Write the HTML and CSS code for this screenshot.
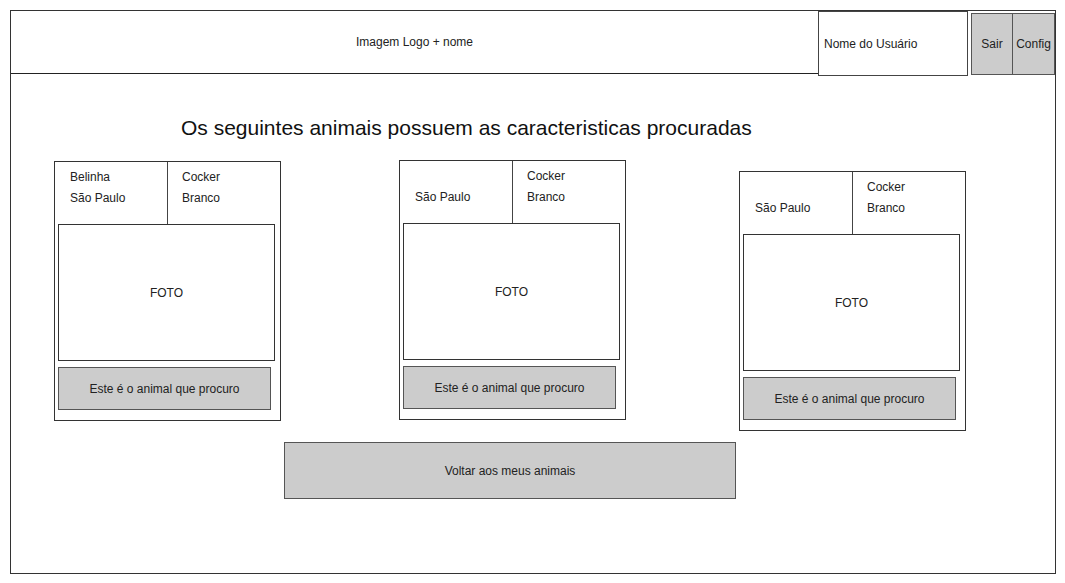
FILE: index.html
```html
<!DOCTYPE html>
<html>
  <head>
    <meta charset="utf-8">
    <title>Resultado da busca</title>
    <link rel="stylesheet" href="styles.css">
  </head>
  <body>
    <div class="frame">
      <!-- topo -->
      <div class="header">
        <div class="logo">Imagem Logo + nome</div>
        <div class="user">Nome do Usuário</div>
        <div class="header-buttons">
          <div class="hbtn">Sair</div>
          <div class="hbtn">Config</div>
        </div>
      </div>

      <div class="content">
        <h2 class="title">Os seguintes animais possuem as caracteristicas procuradas</h2>

        <div class="cards">
          <div class="card card-1">
            <div class="info">
              <div class="cell">
                <span>Belinha</span>
                <span>São Paulo</span>
              </div>
              <div class="cell cell-right">
                <span>Cocker</span>
                <span>Branco</span>
              </div>
            </div>
            <div class="photo">FOTO</div>
            <div class="pick">Este é o animal que procuro</div>
          </div>

          <div class="card card-2">
            <div class="info">
              <div class="cell cell-low">
                <span>São Paulo</span>
              </div>
              <div class="cell cell-right">
                <span>Cocker</span>
                <span>Branco</span>
              </div>
            </div>
            <div class="photo">FOTO</div>
            <div class="pick">Este é o animal que procuro</div>
          </div>

          <div class="card card-3">
            <div class="info">
              <div class="cell cell-low">
                <span>São Paulo</span>
              </div>
              <div class="cell cell-right">
                <span>Cocker</span>
                <span>Branco</span>
              </div>
            </div>
            <div class="photo">FOTO</div>
            <div class="pick">Este é o animal que procuro</div>
          </div>
        </div>

        <div class="back">Voltar aos meus animais</div>
      </div>
    </div>
  </body>
</html>
```

FILE: styles.css
```css
* {
  box-sizing: border-box;
}
body {
  margin: 0;
  background: #fff;
  font-family: "Liberation Sans", Arial, sans-serif;
  font-size: 12px;
  color: #222;
}
.frame {
  margin: 10px 0 0 10px;
  width: 1046px;
  height: 564px;
  border: 1px solid #333;
}

/* topo */
.header {
  display: flex;
  align-items: flex-start;
  height: 63px;
}
.logo {
  flex: 1;
  height: 63px;
  border-bottom: 1px solid #222;
  display: flex;
  align-items: center;
  justify-content: center;
}
.user {
  width: 150px;
  height: 65px;
  border: 1px solid #444;
  display: flex;
  align-items: center;
  padding-left: 5px;
  background: #fff;
  position: relative;
}
.header-buttons {
  display: flex;
  margin: 2px 0 0 3px;
  height: 62px;
  position: relative;
}
.hbtn {
  background: #ccc;
  border: 1px solid #555;
  display: flex;
  align-items: center;
  justify-content: center;
  width: 42px;
}
.hbtn + .hbtn {
  border-left: 0;
  width: 42px;
}

/* conteudo */
.content {
  padding-top: 41px;
}
.title {
  margin: 0;
  padding-left: 170px;
  font-size: 21px;
  font-weight: normal;
  line-height: 25px;
  color: #111;
}
.cards {
  display: flex;
  align-items: flex-start;
  margin-top: 21px;
  padding-left: 43px;
}
.card {
  width: 227px;
  height: 260px;
  border: 1px solid #333;
  padding: 0 5px 0 3px;
}
.card-2 {
  margin: -1px 0 0 118px;
}
.card-3 {
  margin: 10px 0 0 113px;
}
.info {
  display: flex;
  height: 62px;
  margin: 0 -5px 0 -3px;
}
.cell {
  width: 112px;
  display: flex;
  flex-direction: column;
  padding: 5px 0 0 15px;
  line-height: 21px;
}
.cell-right {
  flex: 1;
  border-left: 1px solid #444;
  padding-left: 14px;
}
.cell-low {
  padding-top: 26px;
}
.photo {
  height: 137px;
  border: 1px solid #333;
  display: flex;
  align-items: center;
  justify-content: center;
  font-size: 12px;
}
.pick {
  margin: 6px 4px 0 0;
  height: 43px;
  background: #ccc;
  border: 1px solid #555;
  display: flex;
  align-items: center;
  justify-content: center;
}
.back {
  margin: 11px 0 0 273px;
  width: 452px;
  height: 57px;
  background: #ccc;
  border: 1px solid #555;
  display: flex;
  align-items: center;
  justify-content: center;
}
```
